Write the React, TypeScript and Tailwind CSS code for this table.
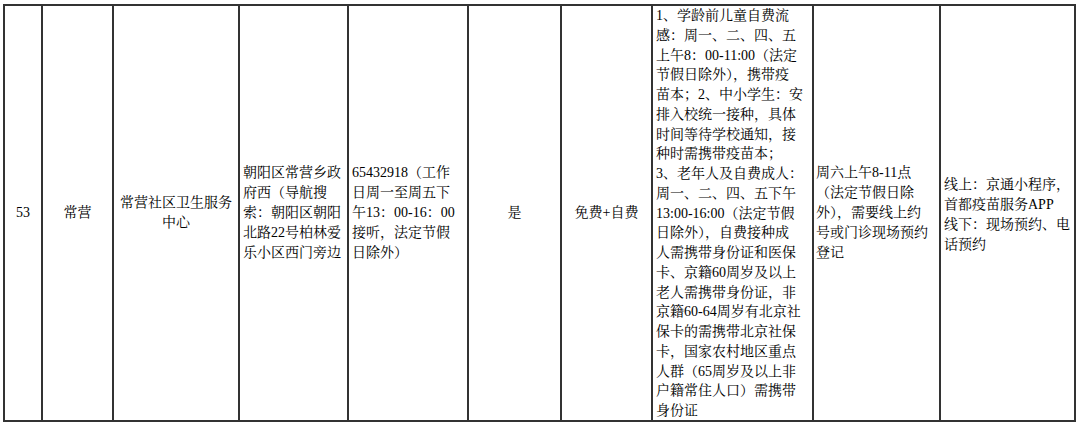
const addressLines = [
  "朝阳区常营乡政",
  "府西（导航搜",
  "索：朝阳区朝阳",
  "北路22号柏林爱",
  "乐小区西门旁边",
];

const phoneLines = [
  "65432918（工作",
  "日周一至周五下",
  "午13：00-16：00",
  "接听，法定节假",
  "日除外）",
];

const scheduleLines = [
  "1、学龄前儿童自费流",
  "感：周一、二、四、五",
  "上午8：00-11:00（法定",
  "节假日除外），携带疫",
  "苗本；2、中小学生：安",
  "排入校统一接种，具体",
  "时间等待学校通知，接",
  "种时需携带疫苗本；",
  "3、老年人及自费成人：",
  "周一、二、四、五下午",
  "13:00-16:00（法定节假",
  "日除外），自费接种成",
  "人需携带身份证和医保",
  "卡、京籍60周岁及以上",
  "老人需携带身份证，非",
  "京籍60-64周岁有北京社",
  "保卡的需携带北京社保",
  "卡，国家农村地区重点",
  "人群（65周岁及以上非",
  "户籍常住人口）需携带",
  "身份证",
];

const weekendLines = [
  "周六上午8-11点",
  "（法定节假日除",
  "外），需要线上约",
  "号或门诊现场预约",
  "登记",
];

const bookingLines = [
  "线上：京通小程序，",
  "首都疫苗服务APP",
  "线下：现场预约、电",
  "话预约",
];

const Lines = ({ lines }: { lines: string[] }) => (
  <>
    {lines.map((l, i) => (
      <div key={i}>{l}</div>
    ))}
  </>
);

const App = () => {
  return (
    <div className="w-[1080px] h-[425px] bg-white overflow-hidden pt-[4px] pl-[3px]">
      <div
        className="grid h-[418px] w-[1073px] grid-cols-[36px_71px_126px_109px_120px_93px_91px_161px_127px_135px] border-2 border-[#333] text-[14px] leading-[20px] text-black whitespace-nowrap"
        style={{ fontFamily: '"Liberation Serif", "Noto Serif CJK SC", "Noto Sans CJK SC", serif' }}
      >
        {/* No. */}
        <div className="flex items-center justify-center">53</div>

        {/* Area */}
        <div className="flex items-center justify-center border-l-2 border-[#333]">常营</div>

        {/* Name */}
        <div className="flex items-center justify-center border-l-2 border-[#333] text-center">
          <div>
            常营社区卫生服务
            <br />
            中心
          </div>
        </div>

        {/* Address */}
        <div className="flex items-center border-l-2 border-[#333] pl-[3px]">
          <div>
            <Lines lines={addressLines} />
          </div>
        </div>

        {/* Phone */}
        <div className="flex items-center border-l-2 border-[#333] pl-[3px]">
          <div>
            <Lines lines={phoneLines} />
          </div>
        </div>

        {/* Flu vaccine */}
        <div className="flex items-center justify-center border-l-2 border-[#333]">是</div>

        {/* Fee */}
        <div className="flex items-center justify-center border-l-2 border-[#333]">免费+自费</div>

        {/* Weekday schedule */}
        <div className="border-l-2 border-[#333] pl-[3px]">
          <div className="leading-[19.75px]">
            <Lines lines={scheduleLines} />
          </div>
        </div>

        {/* Weekend */}
        <div className="flex items-center border-l-2 border-[#333] pl-[2px]">
          <div>
            <Lines lines={weekendLines} />
          </div>
        </div>

        {/* Booking */}
        <div className="flex items-center border-l-2 border-[#333] pl-[3px]">
          <div className="mt-[4px]">
            <Lines lines={bookingLines} />
          </div>
        </div>
      </div>
    </div>
  );
};

export default App;
